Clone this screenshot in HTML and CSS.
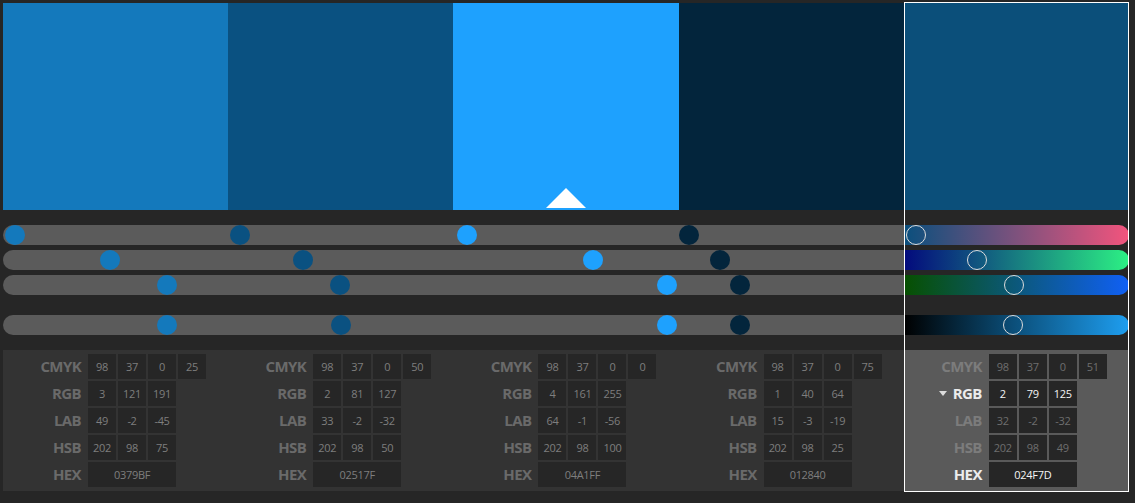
FILE: index.html
```html
<!DOCTYPE html>
<html lang="en">
<head>
<meta charset="utf-8">
<title>Color Theme</title>
<link rel="stylesheet" href="styles.css">
</head>
<body>
<div class="app">
  <div class="col">
    <div class="swatch" style="background:#1479bc"></div>
    <div class="sliders">
      <div class="track"><span class="dot" style="--v:0.012;background:#1479bc"></span></div>
      <div class="track"><span class="dot" style="--v:0.475;background:#1479bc"></span></div>
      <div class="track"><span class="dot" style="--v:0.749;background:#1479bc"></span></div>
      <div class="track t4"><span class="dot" style="--v:0.75;background:#1479bc"></span></div>
    </div>
    <div class="panel">
      <div class="lbl">CMYK</div><div class="val">98</div><div class="val">37</div><div class="val">0</div><div class="val">25</div>
      <div class="lbl">RGB</div><div class="val">3</div><div class="val">121</div><div class="val">191</div><div class="sp"></div>
      <div class="lbl">LAB</div><div class="val">49</div><div class="val">-2</div><div class="val">-45</div><div class="sp"></div>
      <div class="lbl">HSB</div><div class="val">202</div><div class="val">98</div><div class="val">75</div><div class="sp"></div>
      <div class="lbl">HEX</div><div class="val hex">0379BF</div>
    </div>
  </div>
  <div class="col">
    <div class="swatch" style="background:#0a5181"></div>
    <div class="sliders">
      <div class="track"><span class="dot" style="--v:0.008;background:#0a5181"></span></div>
      <div class="track"><span class="dot" style="--v:0.318;background:#0a5181"></span></div>
      <div class="track"><span class="dot" style="--v:0.498;background:#0a5181"></span></div>
      <div class="track t4"><span class="dot" style="--v:0.5;background:#0a5181"></span></div>
    </div>
    <div class="panel">
      <div class="lbl">CMYK</div><div class="val">98</div><div class="val">37</div><div class="val">0</div><div class="val">50</div>
      <div class="lbl">RGB</div><div class="val">2</div><div class="val">81</div><div class="val">127</div><div class="sp"></div>
      <div class="lbl">LAB</div><div class="val">33</div><div class="val">-2</div><div class="val">-32</div><div class="sp"></div>
      <div class="lbl">HSB</div><div class="val">202</div><div class="val">98</div><div class="val">50</div><div class="sp"></div>
      <div class="lbl">HEX</div><div class="val hex">02517F</div>
    </div>
  </div>
  <div class="col">
    <div class="swatch base" style="background:#1ea1fe"><span class="marker"></span></div>
    <div class="sliders">
      <div class="track"><span class="dot" style="--v:0.016;background:#1ea1fe"></span></div>
      <div class="track"><span class="dot" style="--v:0.631;background:#1ea1fe"></span></div>
      <div class="track"><span class="dot" style="--v:0.99;background:#1ea1fe"></span></div>
      <div class="track t4"><span class="dot" style="--v:0.99;background:#1ea1fe"></span></div>
    </div>
    <div class="panel">
      <div class="lbl">CMYK</div><div class="val">98</div><div class="val">37</div><div class="val">0</div><div class="val">0</div>
      <div class="lbl">RGB</div><div class="val">4</div><div class="val">161</div><div class="val">255</div><div class="sp"></div>
      <div class="lbl">LAB</div><div class="val">64</div><div class="val">-1</div><div class="val">-56</div><div class="sp"></div>
      <div class="lbl">HSB</div><div class="val">202</div><div class="val">98</div><div class="val">100</div><div class="sp"></div>
      <div class="lbl">HEX</div><div class="val hex">04A1FF</div>
    </div>
  </div>
  <div class="col">
    <div class="swatch" style="background:#03253c"></div>
    <div class="sliders">
      <div class="track"><span class="dot" style="--v:0.004;background:#03253c"></span></div>
      <div class="track"><span class="dot" style="--v:0.152;background:#03253c"></span></div>
      <div class="track"><span class="dot" style="--v:0.251;background:#03253c"></span></div>
      <div class="track t4"><span class="dot" style="--v:0.25;background:#03253c"></span></div>
    </div>
    <div class="panel">
      <div class="lbl">CMYK</div><div class="val">98</div><div class="val">37</div><div class="val">0</div><div class="val">75</div>
      <div class="lbl">RGB</div><div class="val">1</div><div class="val">40</div><div class="val">64</div><div class="sp"></div>
      <div class="lbl">LAB</div><div class="val">15</div><div class="val">-3</div><div class="val">-19</div><div class="sp"></div>
      <div class="lbl">HSB</div><div class="val">202</div><div class="val">98</div><div class="val">25</div><div class="sp"></div>
      <div class="lbl">HEX</div><div class="val hex">012840</div>
    </div>
  </div>
  <div class="col selected">
    <div class="swatch" style="background:#0b4f7a"></div>
    <div class="sliders">
      <div class="track g-r"><span class="dot ring" style="--v:0.012"></span></div>
      <div class="track g-g"><span class="dot ring" style="--v:0.31"></span></div>
      <div class="track g-b"><span class="dot ring" style="--v:0.49"></span></div>
      <div class="track t4 g-k"><span class="dot ring" style="--v:0.485"></span></div>
    </div>
    <div class="panel">
      <div class="lbl">CMYK</div><div class="val">98</div><div class="val">37</div><div class="val">0</div><div class="val">51</div>
      <div class="lbl active"><span class="caret"></span>RGB</div><div class="val active">2</div><div class="val active">79</div><div class="val active">125</div><div class="sp"></div>
      <div class="lbl">LAB</div><div class="val">32</div><div class="val">-2</div><div class="val">-32</div><div class="sp"></div>
      <div class="lbl">HSB</div><div class="val">202</div><div class="val">98</div><div class="val">49</div><div class="sp"></div>
      <div class="lbl active">HEX</div><div class="val hex active">024F7D</div>
    </div>
  </div>
</div>
</body>
</html>
```
FILE: styles.css
```css
html, body {
  margin: 0;
  padding: 0;
  background: #262626;
}

.app {
  display: flex;
  width: 1135px;
  height: 503px;
  box-sizing: border-box;
  padding: 3px 6px 12px 3px;
  background: #262626;
  font-family: "Open Sans", "Liberation Sans", sans-serif;
}

.col {
  flex: 1 1 0;
  min-width: 0;
  display: flex;
  flex-direction: column;
  position: relative;
}

.col.selected::after {
  content: "";
  position: absolute;
  top: -1px;
  left: 0;
  right: 0;
  bottom: -1px;
  border: 1px solid #ffffff;
  pointer-events: none;
}

.swatch {
  height: 207px;
  position: relative;
}

.marker {
  position: absolute;
  left: 50%;
  bottom: 2px;
  transform: translateX(-50%);
  width: 0;
  height: 0;
  border-left: 20px solid transparent;
  border-right: 20px solid transparent;
  border-bottom: 20px solid #ffffff;
}

.sliders {
  display: flex;
  flex-direction: column;
  gap: 5px;
  padding: 15px 0;
}

.track {
  position: relative;
  height: 20px;
  background: #5b5b5b;
}

.track.t4 {
  margin-top: 15px;
}

.col:first-child .track {
  border-radius: 10px 0 0 10px;
}

.col.selected .track {
  border-radius: 0 10px 10px 0;
}

.g-r { background: linear-gradient(to right, #0a4f7d, #f2547d); }
.g-g { background: linear-gradient(to right, #030a7d, #2cf084); }
.g-b { background: linear-gradient(to right, #075000, #1060f5); }
.g-k { background: linear-gradient(to right, #000000, #0b4f7a 49%, #1e9ef0); }

.dot {
  position: absolute;
  top: 0;
  left: calc((100% - 20px) * var(--v));
  width: 20px;
  height: 20px;
  border-radius: 50%;
  box-sizing: border-box;
}

.dot.ring {
  background: transparent;
  border: 1.5px solid #dcdcdc;
}

.panel {
  display: grid;
  grid-template-columns: 83px repeat(4, 28px);
  grid-auto-rows: 25px;
  column-gap: 2px;
  row-gap: 2px;
  padding: 4px 0;
  background: #333333;
}

.col.selected .panel {
  background: #5a5a5a;
}

.lbl {
  text-align: right;
  padding-right: 5px;
  font-size: 15px;
  font-weight: 700;
  letter-spacing: -0.6px;
  line-height: 25px;
  color: #6a6a6a;
  white-space: nowrap;
}

.val {
  background: #262626;
  color: #7e7e7e;
  font-size: 11px;
  line-height: 25px;
  text-align: center;
  letter-spacing: -0.3px;
}

.val.hex {
  grid-column: span 3;
}

.col.selected .lbl {
  color: #7c7c7c;
}

.col.selected .val {
  color: #6e6e6e;
}

.col.selected .lbl.active {
  color: #ececec;
}

.col.selected .val.active {
  color: #f4f4f4;
}

.caret {
  display: inline-block;
  width: 0;
  height: 0;
  border-left: 4px solid transparent;
  border-right: 4px solid transparent;
  border-top: 5px solid #dcdcdc;
  margin-right: 6px;
  vertical-align: 3px;
}
```
